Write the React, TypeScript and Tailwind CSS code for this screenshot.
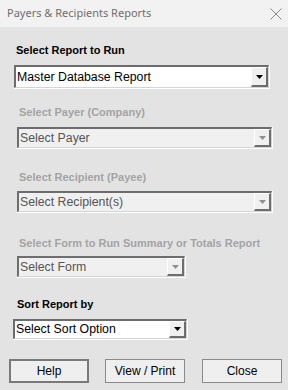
import React from "react";

const SANS = "font-['Liberation_Sans',Arial,sans-serif]";

function Arrow({ disabled }: { disabled?: boolean }) {
  return (
    <svg width="7" height="4" viewBox="0 0 7 4">
      <path d="M0 0h7L3.5 4z" fill={disabled ? "#8f8f8f" : "#000"} />
    </svg>
  );
}

function Combo({
  text,
  width,
  height,
  disabled,
  className = "",
}: {
  text: string;
  width: string;
  height: string;
  disabled?: boolean;
  className?: string;
}) {
  return (
    <div className={`${width} ${height} ${className} border-r border-b border-white`}>
      <div
        className={`flex h-full border-t-2 border-l-2 border-[#6d6d6d] border-r border-b border-r-[#d4d4d4] border-b-[#d4d4d4] ${
          disabled ? "bg-[#f0f0f0]" : "bg-white"
        }`}
      >
        <div
          className={`flex-1 flex items-center pl-[1px] text-[12.3px] leading-none ${SANS} ${
            disabled ? "text-[#555]" : "text-black"
          }`}
        >
          {text}
        </div>
        <div className="w-[17px] flex items-center justify-center bg-[#f0f0f0] border-t border-l border-white border-r-2 border-b-2 border-r-[#6d6d6d] border-b-[#6d6d6d]">
          <Arrow disabled={disabled} />
        </div>
      </div>
    </div>
  );
}

function Label({ text, disabled, className = "" }: { text: string; disabled?: boolean; className?: string }) {
  return (
    <div
      className={`text-[11px] leading-[14px] font-bold ${SANS} ${
        disabled ? "text-[#a3a3a3]" : "text-black"
      } ${className}`}
    >
      {text}
    </div>
  );
}

function Btn({ label, isDefault, className = "" }: { label: string; isDefault?: boolean; className?: string }) {
  return (
    <div
      className={`w-[80px] h-[24px] flex items-center justify-center bg-[#efefef] text-[12px] text-black ${SANS} ${
        isDefault ? "border-2 border-[#7a7a7a]" : "border border-[#8a8a8a]"
      } ${className}`}
    >
      {label}
    </div>
  );
}

export default function App() {
  return (
    <div className="w-[288px] h-[390px] bg-[#e3e3e3] overflow-hidden flex flex-col">
      {/* title bar */}
      <div className="h-[27px] bg-[#f2f2f2] flex items-center justify-between pl-[7px] pr-[5px]">
        <span className="text-[11px] text-[#6f6f6f] font-['Noto_Sans',sans-serif]">
          Payers &amp; Recipients Reports
        </span>
        <svg width="12" height="12" viewBox="0 0 12 12" className="mr-[1px]">
          <path d="M0.5 0.5l11 11M11.5 0.5l-11 11" stroke="#8a8a8a" strokeWidth="1" />
        </svg>
      </div>

      <div className="flex flex-col">
        <Label text="Select Report to Run" className="ml-[16px] mt-[16px]" />
        <Combo text="Master Database Report" width="w-[256px]" height="h-[24px]" className="ml-[14px] mt-[8px]" />

        <Label text="Select Payer (Company)" disabled className="ml-[19px] mt-[16px]" />
        <Combo text="Select Payer" width="w-[256px]" height="h-[22px]" disabled className="ml-[17px] mt-[8px]" />

        <Label text="Select Recipient (Payee)" disabled className="ml-[19px] mt-[21px]" />
        <Combo text="Select Recipient(s)" width="w-[256px]" height="h-[22px]" disabled className="ml-[17px] mt-[7px]" />

        <Label text="Select Form to Run Summary or Totals Report" disabled className="ml-[19px] mt-[23px]" />
        <Combo text="Select Form" width="w-[169px]" height="h-[22px]" disabled className="ml-[17px] mt-[6px]" />

        <Label text="Sort Report by" className="ml-[17px] mt-[19px]" />
        <Combo text="Select Sort Option" width="w-[175px]" height="h-[21px]" className="ml-[13px] mt-[8px]" />

        <div className="flex mt-[19px]">
          <Btn label="Help" isDefault className="ml-[9px]" />
          <Btn label="View / Print" className="ml-[16px]" />
          <Btn label="Close" className="ml-[17px]" />
        </div>
      </div>
    </div>
  );
}
